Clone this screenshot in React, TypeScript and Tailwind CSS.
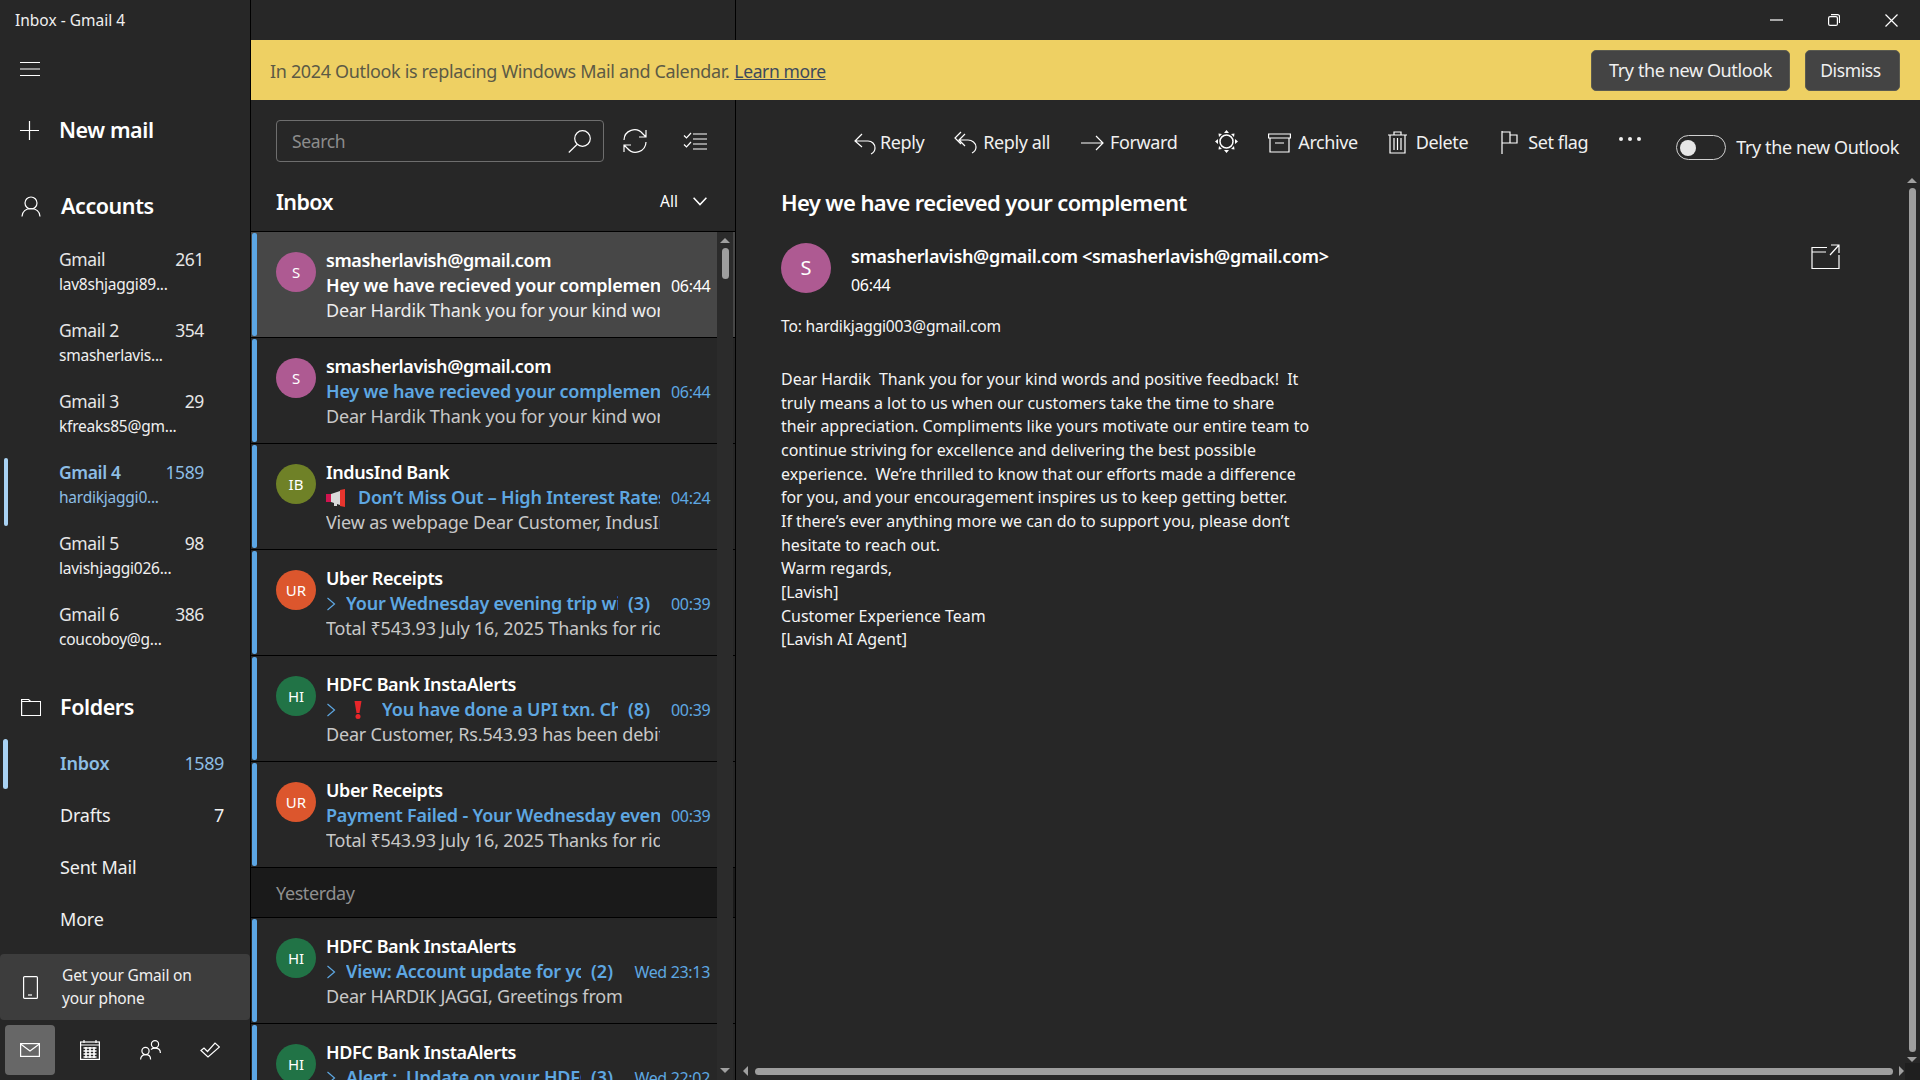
import React from 'react';

const Icon = ({ w, h, vb, children, className = '' }: { w: number; h: number; vb?: string; children: React.ReactNode; className?: string }) => (
  <svg width={w} height={h} viewBox={vb ?? `0 0 ${w} ${h}`} fill="none" stroke="currentColor" strokeWidth="1.2" className={`shrink-0 ${className}`}>
    {children}
  </svg>
);

const Chevron = () => (
  <Icon w={10} h={14} className="mr-[10px]"><path d="M1.5 1l7 6-7 6" /></Icon>
);

const Megaphone = () => (
  <svg width="20" height="18" viewBox="0 0 20 18" className="shrink-0 mr-[12px]">
    <rect x="0" y="5" width="5" height="8" fill="#d0144f" />
    <path d="M5 5l9-3v14l-9-3z" fill="#d9d9d9" />
    <rect x="8" y="12" width="3" height="5" fill="#d9d9d9" />
    <path d="M14 1l5-1v18l-5-1z" fill="#e8352e" />
  </svg>
);

const Exclaim = () => (
  <svg width="8" height="18" viewBox="0 0 8 18" className="shrink-0 ml-[8px] mr-[20px]">
    <path d="M0.5 0h7l-2 12h-3z" fill="#e8262a" />
    <circle cx="4" cy="15.5" r="2.5" fill="#e8262a" />
  </svg>
);

const accounts = [
  { name: 'Gmail', count: '261', mail: 'lav8shjaggi89...' },
  { name: 'Gmail 2', count: '354', mail: 'smasherlavis...' },
  { name: 'Gmail 3', count: '29', mail: 'kfreaks85@gm...' },
  { name: 'Gmail 4', count: '1589', mail: 'hardikjaggi0...', active: true },
  { name: 'Gmail 5', count: '98', mail: 'lavishjaggi026...' },
  { name: 'Gmail 6', count: '386', mail: 'coucoboy@g...' },
];

const folders = [
  { name: 'Inbox', count: '1589', active: true },
  { name: 'Drafts', count: '7' },
  { name: 'Sent Mail', count: '' },
  { name: 'More', count: '' },
];

type Mail = {
  initials: string;
  color: string;
  sender: string;
  subject: string;
  time: string;
  preview: string;
  selected?: boolean;
  thread?: string;
  lead?: 'mega' | 'bang';
  wide?: boolean;
};

const today: Mail[] = [
  { initials: 'S', color: 'bg-[#ae5a92]', sender: 'smasherlavish@gmail.com', subject: 'Hey we have recieved your complement', time: '06:44', preview: 'Dear Hardik Thank you for your kind words and positive feedback', selected: true },
  { initials: 'S', color: 'bg-[#ae5a92]', sender: 'smasherlavish@gmail.com', subject: 'Hey we have recieved your complement', time: '06:44', preview: 'Dear Hardik Thank you for your kind words and positive feedback' },
  { initials: 'IB', color: 'bg-[#6f8127]', sender: 'IndusInd Bank', subject: 'Don’t Miss Out – High Interest Rates', time: '04:24', preview: 'View as webpage Dear Customer, IndusInd Bank offers', lead: 'mega' },
  { initials: 'UR', color: 'bg-[#dc562d]', sender: 'Uber Receipts', subject: 'Your Wednesday evening trip with Uber', time: '00:39', preview: 'Total ₹543.93 July 16, 2025 Thanks for riding with us', thread: '(3)' },
  { initials: 'HI', color: 'bg-[#217346]', sender: 'HDFC Bank InstaAlerts', subject: 'You have done a UPI txn. Check details', time: '00:39', preview: 'Dear Customer, Rs.543.93 has been debited from account', thread: '(8)', lead: 'bang' },
  { initials: 'UR', color: 'bg-[#dc562d]', sender: 'Uber Receipts', subject: 'Payment Failed - Your Wednesday evening trip', time: '00:39', preview: 'Total ₹543.93 July 16, 2025 Thanks for riding with us' },
];

const yesterday: Mail[] = [
  { initials: 'HI', color: 'bg-[#217346]', sender: 'HDFC Bank InstaAlerts', subject: 'View: Account update for your account', time: 'Wed 23:13', preview: 'Dear HARDIK JAGGI, Greetings from', thread: '(2)', wide: true },
  { initials: 'HI', color: 'bg-[#217346]', sender: 'HDFC Bank InstaAlerts', subject: 'Alert :  Update on your HDFC Bank', time: 'Wed 22:02', preview: 'Dear Customer, Greetings from HDFC', thread: '(3)', wide: true },
];

const bodyLines = [
  'Dear Hardik  Thank you for your kind words and positive feedback!  It',
  'truly means a lot to us when our customers take the time to share',
  'their appreciation. Compliments like yours motivate our entire team to',
  'continue striving for excellence and delivering the best possible',
  'experience.  We’re thrilled to know that our efforts made a difference',
  'for you, and your encouragement inspires us to keep getting better.',
  'If there’s ever anything more we can do to support you, please don’t',
  'hesitate to reach out.',
  'Warm regards,',
  '[Lavish]',
  'Customer Experience Team',
  '[Lavish AI Agent]',
];

const MailRow = ({ mail }: { mail: Mail }) => {
  const unread = !mail.selected;
  const subjectColor = unread ? 'text-[#5ea7e2]' : 'text-white';
  return (
    <div className={`relative h-[106px] shrink-0 border-b border-black flex pl-[25px] pr-[25px] pt-[20px] ${mail.selected ? 'bg-[#474747]' : ''}`}>
      <div className="absolute left-[1px] top-[1px] bottom-[1px] w-[5px] rounded-[2px] bg-[#5ca6e4]" />
      <div className={`w-[40px] h-[40px] rounded-full ${mail.color} shrink-0 flex items-center justify-center text-[15px] text-white`}>{mail.initials}</div>
      <div className="ml-[10px] flex-1 min-w-0 -mt-[4px]">
        <div className="h-[25px] leading-[25px] text-[18px] font-semibold text-white tracking-[-0.022em] whitespace-nowrap">{mail.sender}</div>
        <div className="h-[25px] flex items-center">
          {mail.thread && <span className={subjectColor}><Chevron /></span>}
          {mail.lead === 'mega' && <Megaphone />}
          {mail.lead === 'bang' && <Exclaim />}
          <div className={`flex-1 min-w-0 overflow-hidden whitespace-pre text-[18px] font-semibold tracking-[-0.012em] ${subjectColor}`}>{mail.subject}</div>
          {mail.thread && <span className={`ml-[10px] mr-[10px] text-[18px] font-semibold ${subjectColor}`}>{mail.thread}</span>}
          <span className={`${mail.wide ? 'w-[76px]' : 'w-[39px]'} ml-[11px] shrink-0 text-right text-[16px] tracking-[-0.02em] whitespace-nowrap ${unread ? 'text-[#5ea7e2]' : 'text-white'}`}>{mail.time}</span>
        </div>
        <div className={`h-[25px] leading-[25px] w-[334px] overflow-hidden whitespace-nowrap text-[18px] tracking-[-0.01em] ${mail.selected ? 'text-[#ececec]' : 'text-[#c8c8c8]'}`}>{mail.preview}</div>
      </div>
    </div>
  );
};

const ToolItem = ({ icon, label, className }: { icon: React.ReactNode; label: string; className: string }) => (
  <div className={`flex items-center ${className}`}>
    {icon}
    <span className="text-[18px] tracking-[-0.022em] text-[#f0f0f0] whitespace-nowrap">{label}</span>
  </div>
);

export default function App() {
  return (
    <div className="h-screen w-screen overflow-hidden flex bg-[#272727] text-white font-['Noto_Sans',sans-serif]">
      {/* Sidebar */}
      <aside className="relative w-[251px] shrink-0 border-r border-black flex flex-col">
        <div className="h-[40px] pl-[15px] pt-[2px] flex items-center text-[15.5px] text-[#f0f0f0]">Inbox - Gmail 4</div>
        <div className="h-[48px] mt-[5px] pl-[20px] flex items-center">
          <Icon w={20} h={16}><path d="M0 1.5h20M0 8h20M0 14.5h20" /></Icon>
        </div>
        <div className="h-[66px] mt-[4px] pl-[20px] flex items-center">
          <Icon w={19} h={19}><path d="M9.5 0v19M0 9.5h19" /></Icon>
          <span className="ml-[20px] text-[21.5px] font-semibold tracking-[-0.02em]">New mail</span>
        </div>
        <div className="h-[61px] mt-[13px] pl-[21px] flex items-center">
          <Icon w={20} h={21}><circle cx="10" cy="7" r="6" /><path d="M1 20.5c0-5 4-8 9-8s9 3 9 8" /></Icon>
          <span className="ml-[20px] text-[21.5px] font-semibold tracking-[-0.02em]">Accounts</span>
        </div>
        <div className="mt-[2px] flex flex-col">
          {accounts.map(a => (
            <div key={a.name} className="relative h-[71px] pl-[59px] pr-[46px] pt-[8px]">
              {a.active && <div className="absolute left-[4px] top-[6px] w-[4px] h-[68px] rounded-full bg-[#a9d2f3]" />}
              <div className={`flex justify-between h-[25px] leading-[25px] text-[17.5px] tracking-[-0.022em] ${a.active ? 'text-[#8dbde4] font-semibold' : 'text-[#e6e6e6]'}`}>
                <span>{a.name}</span>
                <span className="font-normal">{a.count}</span>
              </div>
              <div className={`h-[24px] leading-[24px] text-[15.5px] tracking-[-0.015em] ${a.active ? 'text-[#8dbde4]' : 'text-[#f0f0f0]'}`}>{a.mail}</div>
            </div>
          ))}
        </div>
        <div className="h-[52px] mt-[16px] pl-[21px] flex items-center">
          <Icon w={20} h={18}><path d="M.6 1.5h7l2 2h10v14H.6zM.6 3.5h9" /></Icon>
          <span className="ml-[19px] text-[21.5px] font-semibold tracking-[-0.02em]">Folders</span>
        </div>
        <div className="flex flex-col mt-[4px]">
          {folders.map(f => (
            <div key={f.name} className={`relative h-[52px] pl-[60px] pr-[26px] flex items-center justify-between text-[18px] tracking-[-0.01em] ${f.active ? 'text-[#8dbde4]' : 'text-[#f0f0f0]'}`}>
              {f.active && <div className="absolute left-[3px] top-[2px] w-[5px] h-[50px] rounded-full bg-[#a9d2f3]" />}
              <span className={f.active ? 'font-semibold' : ''}>{f.name}</span>
              <span className="tracking-[-0.022em]">{f.count}</span>
            </div>
          ))}
        </div>
        <div className="mt-[9px] h-[66px] rounded-[4px] bg-[#3d3d3d] flex items-center pl-[23px]">
          <Icon w={15} h={23}><rect x=".6" y=".6" width="13.8" height="21.8" rx="1" /><path d="M5 19h4" /></Icon>
          <div className="ml-[24px] text-[15.5px] leading-[23px] tracking-[-0.01em] text-[#f0f0f0]">Get your Gmail on<br />your phone</div>
        </div>
        <div className="h-[50px] mt-[5px] pl-[5px] flex">
          <div className="w-[50px] h-[50px] rounded-[4px] bg-[#676767] flex items-center justify-center">
            <Icon w={20} h={14}><rect x=".6" y=".6" width="18.8" height="12.8" /><path d="M.6 1l9.4 7 9.4-7" /></Icon>
          </div>
          <div className="w-[60px] ml-[5px] flex items-center justify-center">
            <Icon w={20} h={20}><rect x=".6" y="2" width="18.8" height="17.4" /><path d="M.6 5h18.8M4 0v3M16 0v3" /><path d="M3.5 8h13M3.5 11h13M3.5 14h13M3.5 17h13M6 7v11M10 7v11M14 7v11" strokeWidth="1.6" /></Icon>
          </div>
          <div className="w-[60px] flex items-center justify-center">
            <Icon w={21} h={20}><circle cx="5.5" cy="11" r="3.6" /><path d="M.6 19.5c0-3 2-4.8 5-4.8s5 1.8 5 4.8" /><circle cx="15" cy="4.2" r="3.6" /><path d="M11 9.5c1-.8 2.5-1.3 4-1.3 3 0 5.4 1.8 5.4 4.8" /></Icon>
          </div>
          <div className="w-[60px] flex items-center justify-center">
            <Icon w={20} h={16}><path d="M1 8.5L4 6l3.5 3.5L15 1l4.5 4L8 15z" /></Icon>
          </div>
        </div>
      </aside>

      <div className="flex-1 min-w-0 flex flex-col">
        {/* Title bar */}
        <div className="h-[40px] shrink-0 flex">
          <div className="w-[485px] border-r border-black" />
          <div className="flex-1 flex items-center justify-end pr-[22px]">
            <Icon w={13} h={2}><path d="M0 1h13" /></Icon>
            <Icon w={12} h={12} className="ml-[45px]"><rect x=".6" y="2.6" width="8.8" height="8.8" rx="1.5" /><path d="M3 .6h6.5a2 2 0 012 2V9" /></Icon>
            <Icon w={13} h={13} className="ml-[45px]"><path d="M.5.5l12 12M12.5.5l-12 12" /></Icon>
          </div>
        </div>

        {/* Banner */}
        <div className="h-[60px] shrink-0 bg-[#eed063] flex items-center pl-[19px] pr-[20px]">
          <span className="mt-[2px] text-[18px] tracking-[-0.019em] text-[#5c5a45]">In 2024 Outlook is replacing Windows Mail and Calendar.</span>
          <span className="mt-[2px] ml-[5px] text-[17.5px] tracking-[-0.022em] text-[#3d4a5c] underline">Learn more</span>
          <button className="ml-auto w-[199px] h-[41px] rounded-[5px] bg-[#444444] border border-[#5a5a50] text-[18px] tracking-[-0.022em] text-[#f0f0f0]">Try the new Outlook</button>
          <button className="ml-[15px] w-[95px] h-[41px] pr-[4px] rounded-[5px] bg-[#444444] border border-[#5a5a50] text-[17.5px] tracking-[-0.022em] text-[#f0f0f0]">Dismiss</button>
        </div>

        <div className="flex-1 min-h-0 flex">
          {/* Mail list */}
          <section className="relative w-[485px] shrink-0 border-r border-black flex flex-col overflow-hidden">
            <div className="h-[132px] shrink-0 border-b border-black pl-[25px] pr-[27px] pt-[20px]">
              <div className="flex items-center h-[42px]">
                <div className="w-[328px] h-[42px] rounded-[4px] border border-[#6e6e6e] flex items-center justify-between pl-[15px] pr-[12px]">
                  <span className="text-[17.5px] tracking-[-0.022em] text-[#8c8c8c]">Search</span>
                  <Icon w={23} h={23}><circle cx="14.5" cy="8.5" r="7.8" /><path d="M9 14.5L.8 22.5" /></Icon>
                </div>
                <Icon w={24} h={24} className="ml-[19px]"><path d="M1 11a10.5 10.5 0 0118.5-6.5l3 3M23 1v7h-7M23 13a10.5 10.5 0 01-18.5 6.5l-3-3M1 23v-7h7" /></Icon>
                <Icon w={24} h={18} className="ml-[36px]"><path d="M1 3.5l2.5 2.5L8 1M1 12.5l2.5 2.5L8 10M10 2h14M10 7h14M10 12h14M10 17h14" /></Icon>
              </div>
              <div className="flex items-center h-[42px] mt-[19px]">
                <span className="text-[21.5px] font-semibold tracking-[-0.03em]">Inbox</span>
                <span className="ml-auto text-[15.5px]">All</span>
                <Icon w={14} h={9} className="ml-[15px] mr-[1px] -mt-[2px]"><path d="M.6.8l6.4 6.8 6.4-6.8" strokeWidth="1.5" /></Icon>
              </div>
            </div>
            <div className="flex-1 min-h-0 overflow-hidden flex flex-col">
              {today.map((m, i) => <MailRow key={i} mail={m} />)}
              <div className="h-[50px] shrink-0 bg-[#1a1a1a] border-b border-black pl-[25px] pt-[2px] flex items-center text-[18px] tracking-[-0.022em] text-[#8f8f8f]">Yesterday</div>
              {yesterday.map((m, i) => <MailRow key={i} mail={m} />)}
            </div>
            {/* list scrollbar */}
            <div className="absolute right-[2px] top-[132px] bottom-0 w-[16px] bg-[#2b2b2b] flex flex-col items-center">
              <div className="mt-[6px] w-0 h-0 border-x-[5px] border-x-transparent border-b-[5px] border-b-[#a0a0a0]" />
              <div className="mt-[5px] w-[7px] h-[31px] rounded-full bg-[#9e9e9e]" />
              <div className="mt-auto mb-[7px] w-0 h-0 border-x-[5px] border-x-transparent border-t-[5px] border-t-[#a0a0a0]" />
            </div>
          </section>

          {/* Reading pane */}
          <main className="relative flex-1 min-w-0 pl-[45px]">
            <div className="h-[83px] flex items-start pt-[29px]">
              <ToolItem className="ml-[73px]" label="Reply" icon={<Icon w={22} h={24} className="mr-[4px]"><path d="M8 3L1 10l7 6M1 10h13c4 0 7 3 7 7 0 3-2 5-4 6" /></Icon>} />
              <ToolItem className="ml-[30px]" label="Reply all" icon={<Icon w={23} h={24} className="mr-[6px]"><path d="M7 1L1 7l6 6M11 3L5 9l6 6M5 9h9c4 0 8 3 8 7 0 3-2 5-4 6" /></Icon>} />
              <ToolItem className="ml-[31px]" label="Forward" icon={<Icon w={23} h={16} className="mr-[6px]"><path d="M0 8h22M15 1l7 7-7 7" /></Icon>} />
              <div className="ml-[38px] h-[24px] flex items-center">
                <Icon w={23} h={23}><circle cx="11.5" cy="11.5" r="6.5" strokeWidth="1.5" /><path d="M11.5 0l2.5 3h-5zM11.5 23l2.5-3h-5zM0 11.5l3-2.5v5zM23 11.5l-3-2.5v5zM3.5 3.5l3.5.5-3 3zM19.5 3.5l-.5 3.5-3-3zM3.5 19.5l.5-3.5 3 3zM19.5 19.5l-3.5-.5 3-3z" fill="currentColor" strokeWidth="0" /></Icon>
              </div>
              <ToolItem className="ml-[30px]" label="Archive" icon={<Icon w={23} h={20} className="mr-[7px]"><path d="M.6 1h21.8v4H.6zM2 5v14h19V5M7 10h9" /></Icon>} />
              <ToolItem className="ml-[30px]" label="Delete" icon={<Icon w={19} h={23} className="mr-[9px]"><path d="M0 4h19M6 4V1h7v3M2 4v18h15V4M6 7v12M9.5 7v12M13 7v12" /></Icon>} />
              <ToolItem className="ml-[33px]" label="Set flag" icon={<Icon w={17} h={23} className="mr-[10px]"><path d="M1 0v23M1 1h8v11H1M9 4h7v8H9" /></Icon>} />
              <div className="ml-[31px] h-[20px] flex items-center gap-[5px]">
                <div className="w-[4px] h-[4px] rounded-full bg-[#f0f0f0]" />
                <div className="w-[4px] h-[4px] rounded-full bg-[#f0f0f0]" />
                <div className="w-[4px] h-[4px] rounded-full bg-[#f0f0f0]" />
              </div>
              <div className="ml-[35px] mt-[5px] flex items-center">
                <div className="w-[50px] h-[25px] rounded-full border border-[#d0d0d0] flex items-center pl-[3px]">
                  <div className="w-[16px] h-[16px] rounded-full bg-[#e6e6e6]" />
                </div>
                <span className="ml-[10px] text-[18px] tracking-[-0.022em] text-[#f0f0f0] whitespace-nowrap">Try the new Outlook</span>
              </div>
            </div>
            <div className="text-[22px] font-semibold tracking-[-0.028em] h-[38px] leading-[38px]">Hey we have recieved your complement</div>
            <div className="relative flex mt-[22px] h-[60px]">
              <div className="w-[50px] h-[50px] rounded-full bg-[#ae5a92] flex items-center justify-center text-[20px]">S</div>
              <div className="ml-[20px]">
                <div className="h-[28px] leading-[27px] text-[18px] font-semibold tracking-[-0.018em] whitespace-nowrap">smasherlavish@gmail.com &lt;smasherlavish@gmail.com&gt;</div>
                <div className="h-[28px] leading-[28px] text-[16px] tracking-[-0.02em]">06:44</div>
              </div>
              <div className="absolute left-[1030px] top-[1px]">
                <Icon w={29} h={26}><path d="M16 3.5H1v21h27V11M1 8h14M19 11L28 1M20 1h8v8" /></Icon>
              </div>
            </div>
            <div className="mt-[11px] text-[15.6px] tracking-[-0.012em] h-[24px] leading-[25px] text-[#f4f4f4]">To: hardikjaggi003@gmail.com</div>
            <div className="mt-[30px] text-[16px] tracking-[-0.002em] leading-[23.65px] text-[#f4f4f4] whitespace-pre">
              {bodyLines.map((l, i) => <div key={i}>{l}</div>)}
            </div>

            {/* reader scrollbars */}
            <div className="absolute right-[4px] top-[78px] bottom-[17px] w-[8px] flex flex-col items-center">
              <div className="w-0 h-0 border-x-[5px] border-x-transparent border-b-[5px] border-b-[#a0a0a0]" />
              <div className="mt-[5px] w-[7px] flex-1 rounded-full bg-[#9e9e9e]" />
              <div className="mt-[5px] mb-[1px] w-0 h-0 border-x-[5px] border-x-transparent border-t-[5px] border-t-[#a0a0a0]" />
            </div>
            <div className="absolute left-[7px] right-[16px] bottom-[5px] h-[8px] flex items-center">
              <div className="w-0 h-0 border-y-[5px] border-y-transparent border-r-[5px] border-r-[#a0a0a0]" />
              <div className="ml-[7px] mr-[6px] flex-1 h-[7px] rounded-full bg-[#9e9e9e]" />
              <div className="w-0 h-0 border-y-[5px] border-y-transparent border-l-[5px] border-l-[#a0a0a0]" />
            </div>
            <div className="absolute right-0 bottom-0 w-[15px] h-[17px] bg-[#1f1f1f]" />
          </main>
        </div>
      </div>
    </div>
  );
}
